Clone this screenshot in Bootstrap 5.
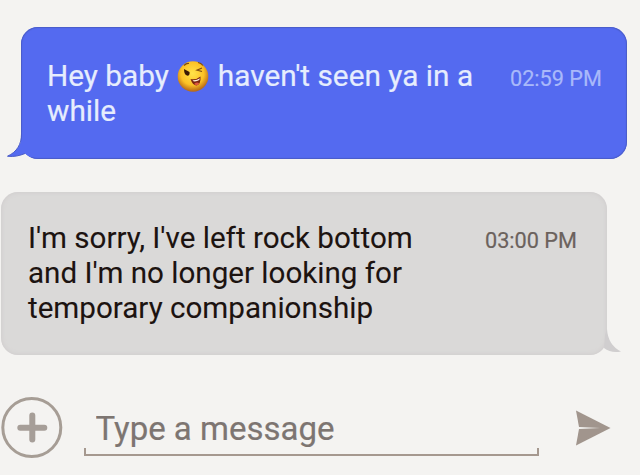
<!DOCTYPE html>
<html lang="en">
<head>
    <meta charset="UTF-8">
    <meta name="viewport" content="width=device-width, initial-scale=1">
    <title>Messages</title>
    <link href="https://cdn.jsdelivr.net/npm/bootstrap@5.3.0/dist/css/bootstrap.min.css" rel="stylesheet">
    <style>
        body {
            background: #f4f3f1;
            font-family: Roboto, "Liberation Sans", sans-serif;
            height: 475px;
            overflow: hidden;
        }
        .thread {
            padding-top: 27px;
            gap: 33px;
        }
        .bubble {
            width: 606px;
            border-radius: 17px;
            font-size: 29.6px;
            line-height: 35px;
        }
        .bubble-in {
            height: 132px;
            margin-left: 21px;
            padding: 31px 25px 0 26px;
            background: #546af0;
            color: #e6edfd;
            font-size: 29.8px;
            -webkit-text-stroke: .2px #e6edfd;
            box-shadow: inset 0 0 1px 1px #4a5cc8;
        }
        .bubble-out {
            height: 163px;
            margin-left: 1px;
            padding: 29px 30px 0 27px;
            background: #dad9d8;
            color: #1c1310;
            -webkit-text-stroke: .1px #1c1310;
            box-shadow: inset 0 0 5px #cdc9ca;
        }
        .stamp {
            font-size: 21.7px;
            line-height: 35px;
            padding-top: 3px;
            -webkit-text-stroke: .2px currentColor;
        }
        .bubble-in .stamp { color: #a9b9fa; }
        .bubble-out .stamp { color: #6b625d; padding-top: 2px; }
        .tail { position: absolute; }
        .tail-left { left: -15px; bottom: 0; }
        .tail-right { right: -15px; bottom: 0; }
        .wink { margin: 0 1px; vertical-align: -6px; }
        .composer { margin-top: 40px; height: 66px; }
        .add-btn { margin-left: 1px; }
        .field-wrap { width: 455px; height: 62px; margin-left: 21px; }
        .field-wrap .form-control {
            font-size: 33px;
            line-height: 40px;
            height: 53px;
            padding: 14px 11px 0 11.5px;
            color: #7d736e;
            -webkit-text-stroke: .2px #7d7571;
        }
        .form-control::placeholder { color: #7d7571; opacity: 1; }
        .field-line {
            height: 8px;
            border: 2px solid #a5988f;
            border-top: 0;
        }
        .send-btn { margin-left: 37px; }
    </style>
</head>
<body>

    <!-- Messages -->
    <main class="thread d-flex flex-column">
        <div class="bubble bubble-in position-relative d-flex justify-content-between">
            <svg class="tail tail-left" width="36" height="30" viewBox="0 0 36 30">
                <path d="M16.500 3C16 15 11 23 1.500 27.200C8 28.200 14 26.500 19 24.500L24 28L32 28V3Z" fill="#546af0"/>
                <path d="M15.500 5C15.500 15 11 23 1.500 27.200C8 28.200 14 26.500 19 24.500" fill="none" stroke="#4a5cc8"/>
            </svg>
            <div class="position-relative text-nowrap">Hey baby <svg class="wink" width="32" height="32" viewBox="0 0 32 32">
                <defs>
                    <radialGradient id="face" cx=".48" cy=".4" r=".58">
                        <stop offset="0" stop-color="#ffe34a"/>
                        <stop offset=".65" stop-color="#fcc125"/>
                        <stop offset="1" stop-color="#b96a18"/>
                    </radialGradient>
                </defs>
                <circle cx="16" cy="16.500" r="15.300" fill="url(#face)"/>
                <path d="M7 5.500Q9.500 3 12 3.500M21 2.500Q24 3 26 5.500" fill="none" stroke="#7d4a10" stroke-width="1.200"/>
                <path d="M7 9L12.500 12Q13 15.500 10.500 15.800Q7 15 7 9Z" fill="#3b1a05"/>
                <path d="M25 8L20 10.200L25 11.500" fill="none" stroke="#7d4a10" stroke-width="1.200"/>
                <path d="M13.500 19Q19.500 20 23.500 16.500Q24 24.500 19.500 25.500Q15.500 25 13.500 19Z" fill="#7a2410"/>
                <path d="M15.500 20.200Q20 20.500 22.800 18.200L22.300 20Q19.500 21.800 16.500 21.300Z" fill="#fff0dc"/>
                <path d="M17 24Q20 21.500 22.300 23.200Q21 25.500 19.500 25.500Z" fill="#df573e"/>
            </svg> haven't seen ya in a<br>while</div>
            <span class="stamp position-relative text-nowrap">02:59 PM</span>
        </div>

        <div class="bubble bubble-out position-relative d-flex justify-content-between">
            <svg class="tail tail-right" width="20" height="32" viewBox="14 0 20 32">
                <path d="M17 12L19 6Q20 22 33 28.500Q23 30.500 16 25Z" fill="#d0cecf"/>
            </svg>
            <div class="position-relative text-nowrap">I'm sorry, I've left rock bottom<br>and I'm no longer looking for<br>temporary companionship</div>
            <span class="stamp position-relative text-nowrap">03:00 PM</span>
        </div>
    </main>

    <!-- Message input -->
    <form class="composer d-flex align-items-start">
        <button type="button" class="add-btn btn p-0 border-0 lh-1" aria-label="Add">
            <svg width="62" height="66" viewBox="0 0 62 66">
                <circle cx="30.800" cy="32.500" r="29" fill="none" stroke="#a69d95" stroke-width="3"/>
                <path d="M31.300 20.500V44.500M19.300 32.800H43.300" stroke="#a69e98" stroke-width="6" stroke-linecap="round"/>
            </svg>
        </button>
        <div class="field-wrap">
            <input type="text" class="form-control border-0 bg-transparent shadow-none" placeholder="Type a message">
            <div class="field-line"></div>
        </div>
        <button type="button" class="send-btn btn p-0 border-0 lh-1" aria-label="Send">
            <svg width="36" height="66" viewBox="0 0 36 66">
                <path d="M0 15.500L34.500 33L24 33L3 32Z" fill="#a1958d"/>
                <path d="M0 50.500L34.500 33L24 33L3 34Z" fill="#a1958d"/>
            </svg>
        </button>
    </form>

    <script src="https://cdn.jsdelivr.net/npm/bootstrap@5.3.0/dist/js/bootstrap.bundle.min.js"></script>
</body>
</html>
